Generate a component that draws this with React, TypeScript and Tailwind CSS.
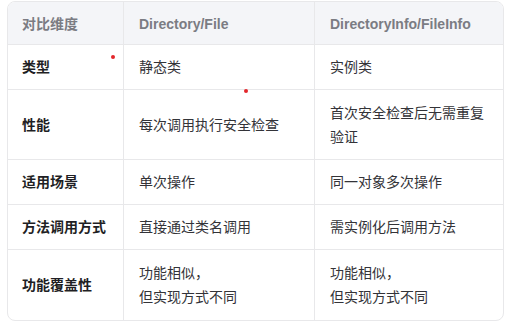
import React from "react";

const rows: { k: string; a: string[]; b: string[]; tall?: boolean }[] = [
  { k: "类型", a: ["静态类"], b: ["实例类"] },
  { k: "性能", a: ["每次调用执行安全检查"], b: ["首次安全检查后无需重复", "验证"], tall: true },
  { k: "适用场景", a: ["单次操作"], b: ["同一对象多次操作"] },
  { k: "方法调用方式", a: ["直接通过类名调用"], b: ["需实例化后调用方法"] },
  { k: "功能覆盖性", a: ["功能相似，", "但实现方式不同"], b: ["功能相似，", "但实现方式不同"], tall: true },
];

export default function App() {
  const font = { fontFamily: '"Liberation Sans", "Noto Sans CJK SC", sans-serif' };
  return (
    <div className="relative w-[513px] h-[323px] bg-white pl-[7px] pt-[1px]" style={font}>
      <div className="w-[497px] rounded-lg border border-[#e8e8ea] overflow-hidden">
        <table className="border-separate border-spacing-0 w-full table-fixed">
          <colgroup>
            <col className="w-[116px]" />
            <col className="w-[191px]" />
            <col className="w-[188px]" />
          </colgroup>
          <thead>
            <tr className="bg-[#f4f5f8]">
              <th className="h-[43px] text-left align-middle pl-[14px] pt-[2px] text-[14px] font-bold text-[#7b7c83] border-b border-r border-[#e8e8ea]">对比维度</th>
              <th className="h-[43px] text-left align-middle pl-[15px] pt-[2px] text-[14px] font-bold text-[#7b7c83] border-b border-r border-[#e8e8ea]">Directory/File</th>
              <th className="h-[43px] text-left align-middle pl-[15px] pt-[2px] text-[14px] font-bold text-[#7b7c83] border-b border-[#e8e8ea]">DirectoryInfo/FileInfo</th>
            </tr>
          </thead>
          <tbody>
            {rows.map((r, i) => {
              const last = i === rows.length - 1;
              const h = r.tall ? "h-[70px]" : "h-[45px]";
              const bb = last ? "" : "border-b";
              return (
                <tr key={i}>
                  <td className={`${h} ${bb} border-r border-[#e8e8ea] pl-[14px] align-middle text-[14px] font-bold text-[#1f1f24] leading-[24px]`}>{r.k}</td>
                  <td className={`${h} ${bb} border-r border-[#e8e8ea] pl-[15px] align-middle text-[14px] text-[#333338] leading-[24px]`}>
                    {r.a.map((t, j) => (
                      <div key={j}>{t}</div>
                    ))}
                  </td>
                  <td className={`${h} ${bb} border-[#e8e8ea] pl-[15px] align-middle text-[14px] text-[#333338] leading-[24px]`}>
                    {r.b.map((t, j) => (
                      <div key={j}>{t}</div>
                    ))}
                  </td>
                </tr>
              );
            })}
          </tbody>
        </table>
      </div>
      <div className="absolute left-[111px] top-[55px] w-[4px] h-[4px] rounded-full bg-[#e3262b]" />
      <div className="absolute left-[244px] top-[89px] w-[4px] h-[4px] rounded-full bg-[#e3262b]" />
    </div>
  );
}
